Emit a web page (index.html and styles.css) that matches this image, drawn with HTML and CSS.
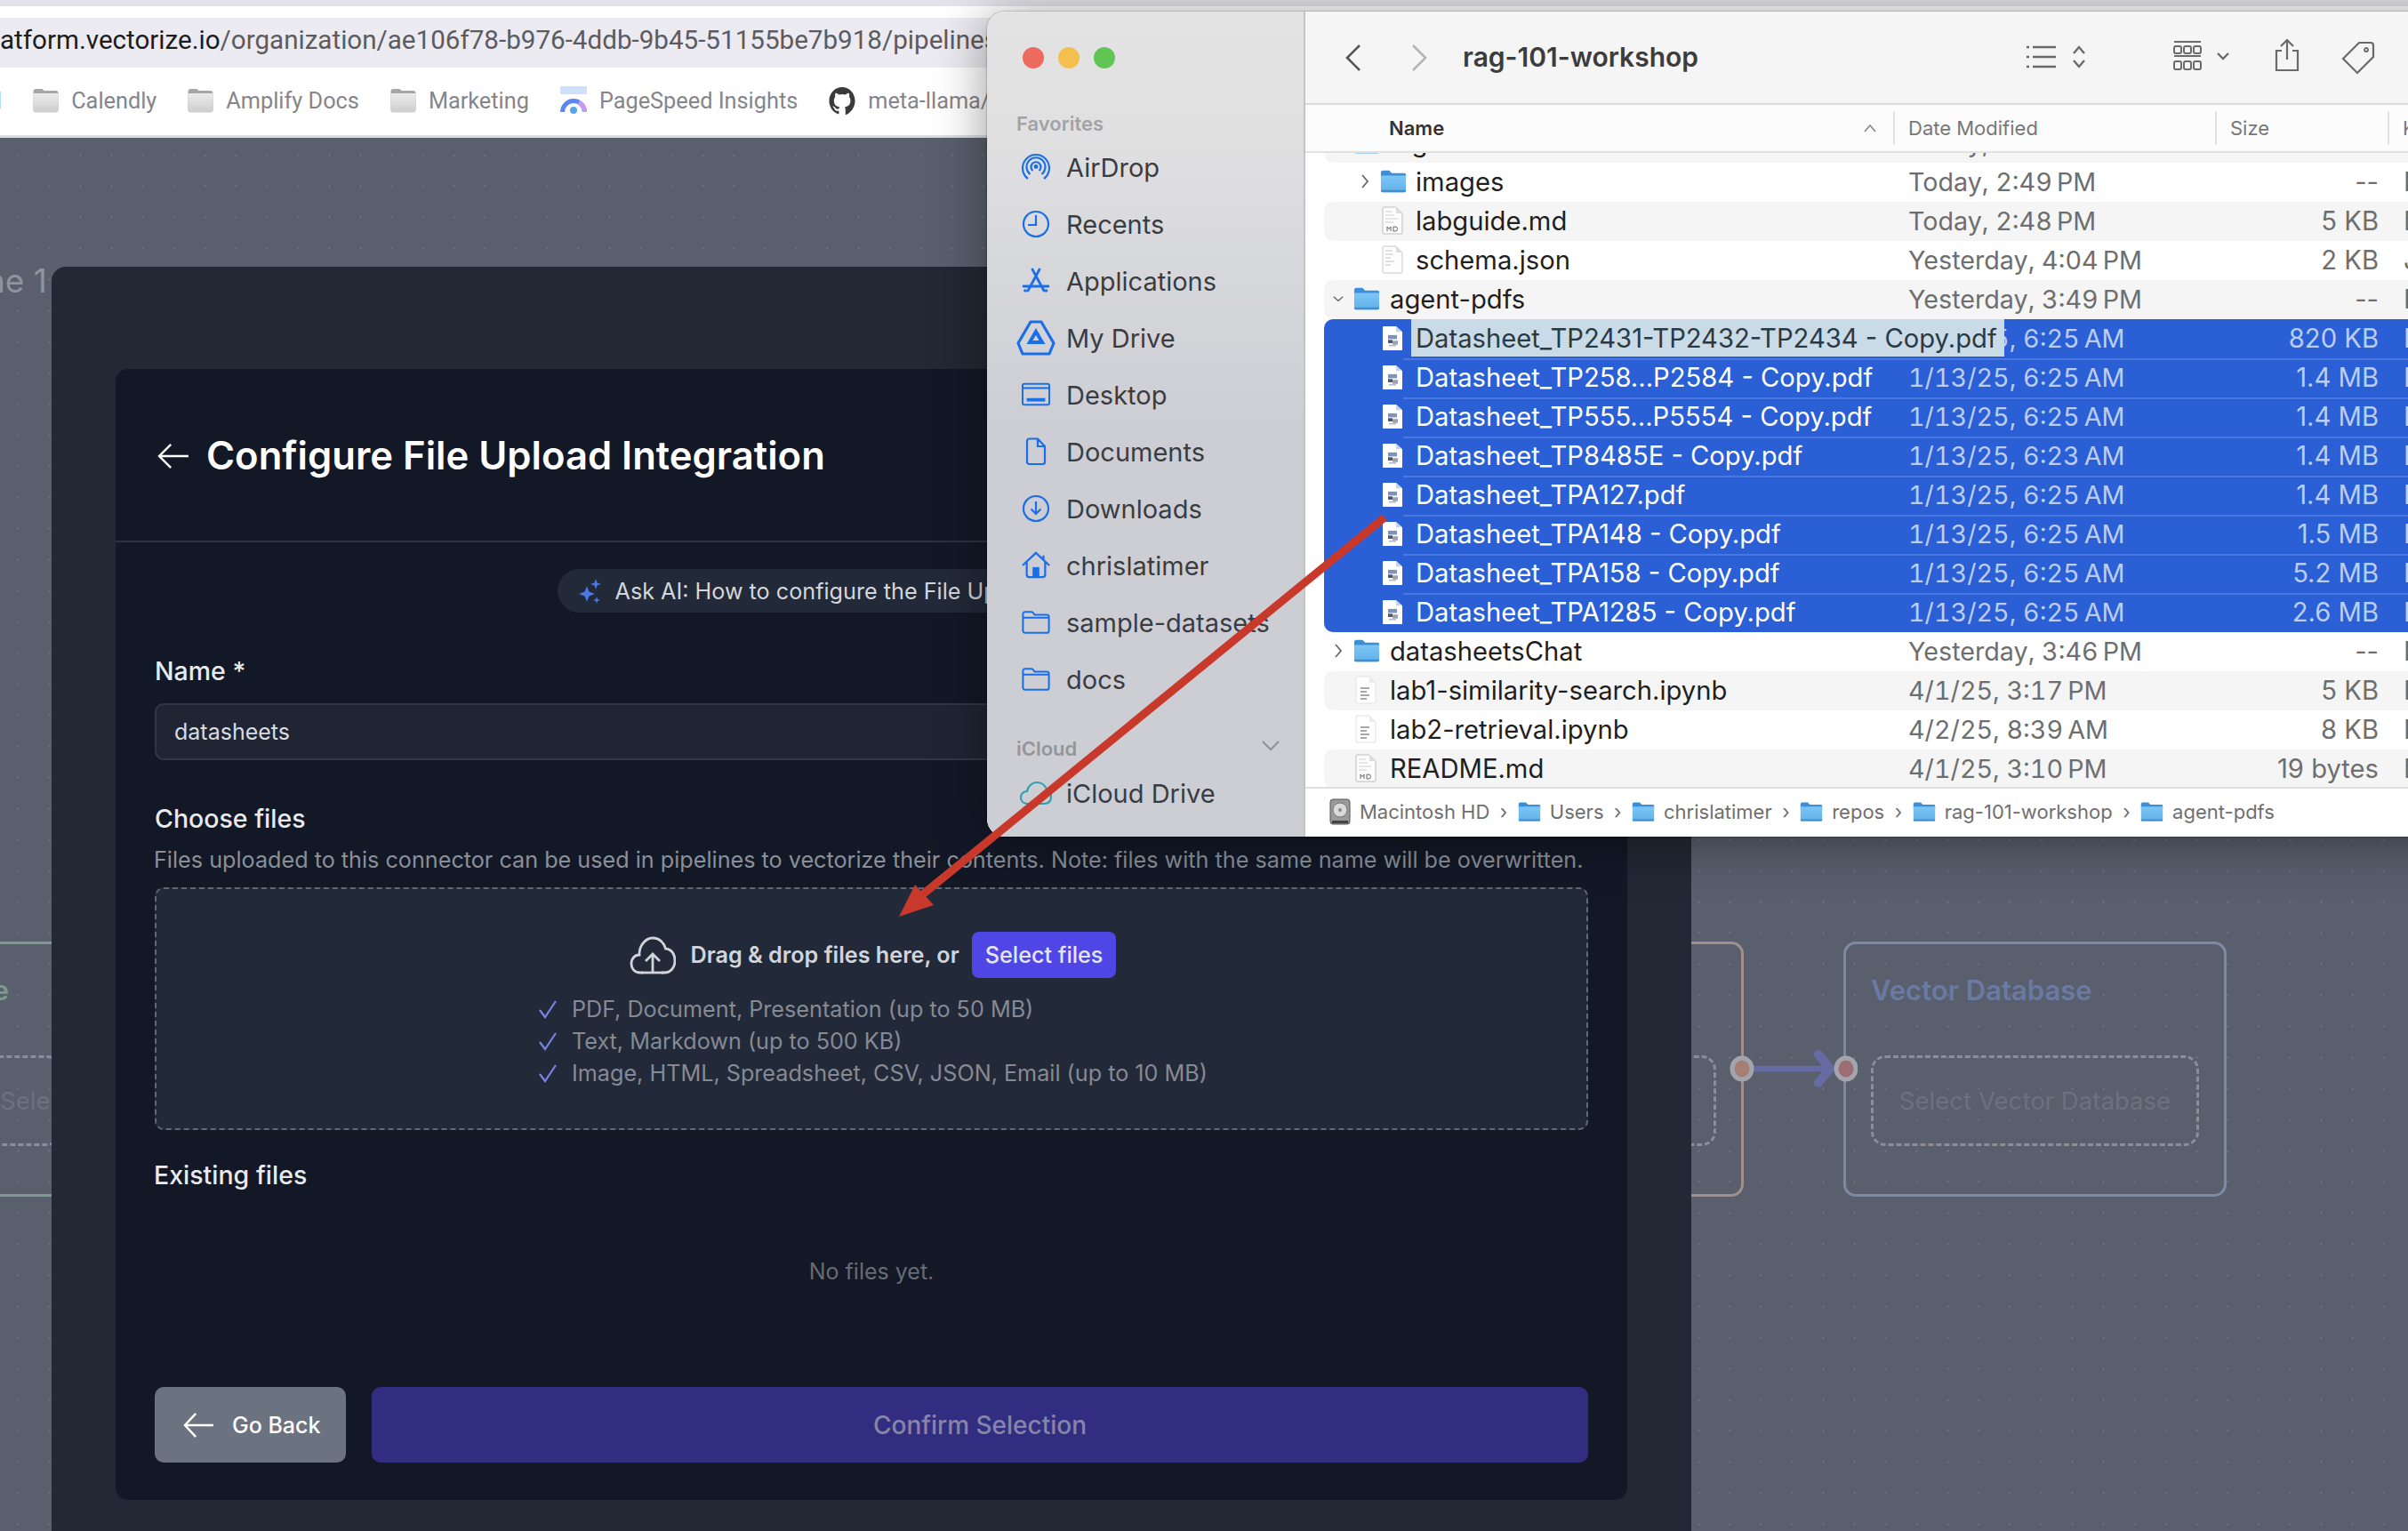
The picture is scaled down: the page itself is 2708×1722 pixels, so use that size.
FILE: index.html
```html
<!DOCTYPE html>
<html>
<head>
    <meta charset="utf-8">
    <title>Configure File Upload Integration</title>
    <link rel="stylesheet" href="styles.css">
</head>
<body>
<svg class="defs" width="0" height="0">
    <defs>
        <linearGradient id="fold" x1="0" y1="0" x2="0" y2="1">
            <stop offset="0" stop-color="#7cc6f5"/>
            <stop offset="1" stop-color="#62b0ea"/>
        </linearGradient>
        <linearGradient id="bmfold" x1="0" y1="0" x2="0" y2="1">
            <stop offset="0" stop-color="#ececec"/>
            <stop offset="1" stop-color="#cdcdcd"/>
        </linearGradient>
        <symbol id="folder" viewBox="0 0 32 28">
            <path d="M1 3.500C1 2 2 1 3.500 1H11l3 3h15c1.300 0 2 .8 2 2v4H1z" fill="#3d8fd8"/>
            <path d="M1 7h30v18c0 1.300-.8 2-2 2H3c-1.300 0-2-.7-2-2z" fill="url(#fold)"/>
            <path d="M1 24.500h30V25c0 1.300-.8 2-2 2H3c-1.300 0-2-.7-2-2z" fill="#3f8fd2"/>
        </symbol>
        <symbol id="bmfolder" viewBox="0 0 30 28">
            <path d="M1 4c0-2 1-3 3-3h6c1 0 1.500.5 2 1l1 1h13c2 0 3 1 3 3v18c0 2-1 3-3 3H4c-2 0-3-1-3-3z" fill="#a6a6a6"/>
            <path d="M1 6h28v19c0 1.500-1 2.500-2.500 2.500h-23C2 27.500 1 26.500 1 25z" fill="url(#bmfold)"/>
        </symbol>
        <symbol id="pdf" viewBox="0 0 24 32" preserveAspectRatio="none">
            <path d="M1 2c0-.6.4-1 1-1h14l7 7v22c0 .6-.4 1-1 1H2c-.6 0-1-.4-1-1z" fill="#fff"/>
            <path d="M16 1v7h7z" fill="#c9d2e2"/>
            <rect x="7" y="12" width="10" height="5" fill="#7d92be"/>
            <rect x="7" y="18" width="5" height="4" fill="#4b5470"/>
            <rect x="12" y="19" width="6" height="5" fill="#9aa2b4"/>
            <rect x="8" y="24" width="8" height="2" fill="#b8bdc9"/>
        </symbol>
        <symbol id="textdoc" viewBox="0 0 24 32">
            <path d="M1 2c0-.6.4-1 1-1h14l7 7v22c0 .6-.4 1-1 1H2c-.6 0-1-.4-1-1z" fill="#fdfdfd" stroke="#c8c8c8"/>
            <path d="M16 1v7h7z" fill="#dedede"/>
            <path d="M4 6h8M4 10h9M4 14h6M4 18h10M4 22h6" stroke="#c4c4c4" stroke-width="1.200"/>
        </symbol>
        <symbol id="mddoc" viewBox="0 0 24 32">
            <path d="M1 2c0-.6.4-1 1-1h14l7 7v22c0 .6-.4 1-1 1H2c-.6 0-1-.4-1-1z" fill="#fdfdfd" stroke="#bdbdbd"/>
            <path d="M16 1v7h7z" fill="#dedede"/>
            <path d="M4 6h8M4 10h10M4 14h14M4 18h9" stroke="#cfcfcf" stroke-width="1.200"/>
            <path d="M6 28v-5l2 2.500 2-2.500v5M13 23v5h2a2.500 2.500 0 0 0 0-5z" fill="none" stroke="#666" stroke-width="1"/>
        </symbol>
        <symbol id="notebook" viewBox="0 0 24 32">
            <path d="M1 2c0-.6.4-1 1-1h14l7 7v22c0 .6-.4 1-1 1H2c-.6 0-1-.4-1-1z" fill="#fff" stroke="#e2e2e2"/>
            <path d="M16 1v7h7z" fill="#ececec"/>
            <path d="M6 14h10M6 18h7M6 22h10M6 26h7" stroke="#a8a8a8" stroke-width="1.800"/>
        </symbol>
        <symbol id="side-folder" viewBox="0 0 34 28">
            <path d="M1.500 5V4c0-1.500 1-2.500 2.500-2.500h7.500c1 0 1.500.4 2 1L15.500 5H30c1.500 0 2.500 1 2.500 2.500V24c0 1.500-1 2.500-2.500 2.500H4c-1.500 0-2.500-1-2.500-2.500zM1.500 8.500h31" fill="none" stroke="#1a6fe8" stroke-width="2.200"/>
        </symbol>
    </defs>
</svg>

<div class="screen">
    <div class="top-strip"></div>
    <div class="urlbar"><span class="host">atform.vectorize.io</span>/organization/ae106f78-b976-4ddb-9b45-51155be7b918/pipelines</div>
    <div class="bookmarks">
        <span class="bm bm-cut">l</span>
        <span class="bm"><svg class="bm-folder"><use href="#bmfolder"/></svg>Calendly</span>
        <span class="bm"><svg class="bm-folder"><use href="#bmfolder"/></svg>Amplify Docs</span>
        <span class="bm"><svg class="bm-folder"><use href="#bmfolder"/></svg>Marketing</span>
        <span class="bm"><svg class="bm-site" viewBox="0 0 32 32"><rect x="1" y="0" width="30" height="9" rx="1" fill="#cfe0fb"/><path d="M3.500 29a12.500 12.500 0 0 1 25 0" fill="none" stroke="#5c86ee" stroke-width="5"/><path d="M22 18a12.500 12.500 0 0 1 6.500 11" fill="none" stroke="#c79cf0" stroke-width="5"/><circle cx="16" cy="27" r="4" fill="#5aa6ee"/></svg>PageSpeed Insights</span>
        <span class="bm"><svg class="bm-site" viewBox="0 0 32 33"><path d="M16 1C7.700 1 1 8 1 17c0 7 4.300 13 10.300 15.300.8.2 1-.4 1-.8v-3c-4.200 1-5-2-5-2-.7-1.800-1.700-2.300-1.700-2.300-1.400-1 .1-1 .1-1 1.500.1 2.300 1.600 2.300 1.600 1.300 2.400 3.500 1.700 4.400 1.300.1-1 .5-1.700 1-2.100-3.300-.4-6.800-1.700-6.800-7.600 0-1.700.6-3 1.500-4.100-.1-.4-.7-2 .2-4.200 0 0 1.300-.4 4.100 1.600a14 14 0 0 1 7.500 0c2.800-2 4.100-1.600 4.100-1.600.9 2.200.3 3.800.2 4.200 1 1.100 1.500 2.400 1.500 4.100 0 5.900-3.500 7.200-6.800 7.600.5.500 1 1.400 1 2.800v5.500c0 .4.300 1 1 .8C26.700 30 31 24 31 17 31 8 24.300 1 16 1z" fill="#3a3a3a"/></svg>meta-llama/synth</span>
    </div>

    <div class="canvas">
        <div class="canvas-title">ne 1</div>

        <div class="node node-source">
            <div class="node-name">Source Type</div>
            <div class="node-slot">Select Source</div>
        </div>
        <div class="node node-embed">
            <div class="node-slot"></div>
        </div>
        <div class="node node-vector">
            <div class="node-name">Vector Database</div>
            <div class="node-slot">Select Vector Database</div>
        </div>
        <svg class="edge" viewBox="0 0 146 56">
            <path d="M18 28h92" stroke="#666ba3" stroke-width="6.500"/>
            <path d="M102 12l13 16-13 16" fill="none" stroke="#666ba3" stroke-width="10" stroke-linecap="round"/>
            <ellipse cx="16" cy="28" rx="11" ry="12" fill="#a67f74" stroke="#a3a5ad" stroke-width="5"/>
            <ellipse cx="133" cy="28" rx="11" ry="12" fill="#9c6e74" stroke="#a3a5ad" stroke-width="5"/>
        </svg>

        <div class="dialog">
            <div class="card">
                <div class="card-head">
                    <svg class="head-arrow" viewBox="0 0 40 32"><path d="M38 16H3M17 2L3 16l14 14" fill="none" stroke="#fff" stroke-width="2.600"/></svg>
                    <h1>Configure File Upload Integration</h1>
                </div>
                <div class="card-body">
                    <div class="ask-ai">
                        <svg class="spark" viewBox="0 0 28 30"><path d="M11 9l2.500 6.500L20 18l-6.500 2.500L11 27l-2.500-6.500L2 18l6.500-2.500z" fill="#4a78e6"/><path d="M21 1l1.600 4.400L27 7l-4.400 1.600L21 13l-1.600-4.400L15 7l4.400-1.600zM22 21l1 2.900 3 1.100-3 1.100-1 2.900-1-2.900-3-1.100 3-1.100z" fill="#4a78e6"/></svg>
                        Ask AI: How to configure the File Upload Integration
                    </div>

                    <label class="field-label name-label">Name *</label>
                    <div class="text-input">datasheets</div>

                    <label class="field-label choose-label">Choose files</label>
                    <p class="help">Files uploaded to this connector can be used in pipelines to vectorize their contents. Note: files with the same name will be overwritten.</p>

                    <div class="dropzone">
                        <div class="drop-row">
                            <svg class="cloud" viewBox="0 0 52 44"><path d="M15 42H12C5 42 2 37 2 32c0-6 4-10 9-10-.5-9 6-19 15-19 8 0 13 6 14.500 12 6.500.5 10.500 6 10.500 13.500 0 8-5 13.500-12 13.500h-3" fill="none" stroke="#d1d5db" stroke-width="2.800"/><path d="M26 41V22M18 29l8-8 8 8" fill="none" stroke="#d1d5db" stroke-width="2.800"/><path d="M14 42h24" stroke="#d1d5db" stroke-width="2.800"/></svg>
                            <span class="drop-text">Drag &amp; drop files here, or</span>
                            <span class="select-btn">Select files</span>
                        </div>
                        <ul class="types">
                            <li><svg class="tick" viewBox="0 0 22 22"><path d="M2 12l6 8L20 2" fill="none" stroke="#7b83e0" stroke-width="2.200"/></svg>PDF, Document, Presentation (up to 50 MB)</li>
                            <li><svg class="tick" viewBox="0 0 22 22"><path d="M2 12l6 8L20 2" fill="none" stroke="#7b83e0" stroke-width="2.200"/></svg>Text, Markdown (up to 500 KB)</li>
                            <li><svg class="tick" viewBox="0 0 22 22"><path d="M2 12l6 8L20 2" fill="none" stroke="#7b83e0" stroke-width="2.200"/></svg>Image, HTML, Spreadsheet, CSV, JSON, Email (up to 10 MB)</li>
                        </ul>
                    </div>

                    <label class="field-label existing-label">Existing files</label>
                    <div class="no-files">No files yet.</div>

                    <div class="card-foot">
                        <div class="btn-back">
                            <svg class="back-arrow" viewBox="0 0 38 32"><path d="M37 16H3M16 2L3 16l13 14" fill="none" stroke="#fff" stroke-width="2.600"/></svg>
                            Go Back
                        </div>
                        <div class="btn-confirm">Confirm Selection</div>
                    </div>
                </div>
            </div>
        </div>
    </div>

    <div class="finder">
        <div class="sidebar">
            <div class="lights"><i class="red"></i><i class="yellow"></i><i class="green"></i></div>
            <div class="side-title">Favorites</div>
            <div class="side-item"><svg viewBox="0 0 32 32"><g fill="none" stroke="#1a6fe8" stroke-width="2.200"><path d="M7 29a15 15 0 1 1 18 0"/><path d="M9.500 24a10.500 10.500 0 1 1 13 0"/><path d="M12.500 20a5.500 5.500 0 1 1 7 0"/></g><circle cx="16" cy="15.500" r="2.400" fill="#1a6fe8"/></svg>AirDrop</div>
            <div class="side-item"><svg viewBox="0 0 32 32"><g fill="none" stroke="#1a6fe8" stroke-width="2.200"><circle cx="16" cy="16" r="14"/><path d="M16 6v11H7"/></g></svg>Recents</div>
            <div class="side-item"><svg viewBox="0 0 32 32"><g fill="none" stroke="#1a6fe8" stroke-width="2.800" stroke-linecap="round"><path d="M12 3l13 24M20 3L7 27"/><path d="M2 22h28"/><path d="M3.500 27h1M27 27h1"/></g></svg>Applications</div>
            <div class="side-item"><svg class="drive" viewBox="0 0 44 40"><path d="M16 2h12l14 24-5 12H7L2 26z" fill="none" stroke="#1a6fe8" stroke-width="3.200" stroke-linejoin="round"/><path d="M22 13l7 12H15z" fill="none" stroke="#1a6fe8" stroke-width="4"/></svg>My Drive</div>
            <div class="side-item"><svg viewBox="0 0 34 28"><g fill="none" stroke="#1a6fe8" stroke-width="2.200"><rect x="1" y="1" width="32" height="25" rx="2"/><path d="M1 6h32"/></g><rect x="6" y="18" width="22" height="4" fill="#1a6fe8"/></svg>Desktop</div>
            <div class="side-item"><svg viewBox="0 0 32 32"><path d="M6 4c0-1.500 1-2.500 2.500-2.500H18L26 10v17.500C26 29 25 30 23.500 30h-15C7 30 6 29 6 27.500zM18 1.500V10h8" fill="none" stroke="#1a6fe8" stroke-width="2.200"/></svg>Documents</div>
            <div class="side-item"><svg viewBox="0 0 32 32"><g fill="none" stroke="#1a6fe8" stroke-width="2.200"><circle cx="16" cy="16" r="14"/><path d="M16 8v14M10.500 16.500L16 22l5.500-5.500"/></g></svg>Downloads</div>
            <div class="side-item"><svg viewBox="0 0 34 32"><path d="M1 16L17 1l16 15M6 12v15c0 2 1 3 3 3h16c2 0 3-1 3-3V12M26 4v6" fill="none" stroke="#1a6fe8" stroke-width="2.400"/><rect x="13" y="18" width="8" height="12" fill="#1a6fe8"/></svg>chrislatimer</div>
            <div class="side-item"><svg viewBox="0 0 34 28"><use href="#side-folder"/></svg>sample-datasets</div>
            <div class="side-item"><svg viewBox="0 0 34 28"><use href="#side-folder"/></svg>docs</div>
            <div class="side-title icloud">iCloud<svg viewBox="0 0 22 14"><path d="M2 2l9 9 9-9" fill="none" stroke="#8f9097" stroke-width="2"/></svg></div>
            <div class="side-item last"><svg class="cloud-side" viewBox="0 0 38 28"><path d="M10 26C5 26 2 23 2 19c0-4 3-7 7-7 1-6 6-10 11-10 6 0 10 4 11 9 3 1 5 4 5 7 0 5-3 8-8 8z" fill="none" stroke="#2e9fb0" stroke-width="2.200"/></svg>iCloud Drive</div>
        </div>

        <div class="pane">
            <div class="toolbar">
                <svg class="nav back" viewBox="0 0 20 32"><path d="M17 2L3 16l14 14" fill="none" stroke="#555" stroke-width="2.600"/></svg>
                <svg class="nav fwd" viewBox="0 0 20 32"><path d="M3 2l14 14L3 30" fill="none" stroke="#b4b4b4" stroke-width="2.600"/></svg>
                <span class="folder-title">rag-101-workshop</span>
                <svg class="tool t-list" viewBox="0 0 70 30"><g stroke="#6a6a6a" stroke-width="2.400" fill="none"><path d="M8 4h26M8 15h26M8 26h26"/><path d="M1 4h3M1 15h3M1 26h3"/><path d="M54 11l6-7 6 7M54 19l6 7 6-7"/></g></svg>
                <svg class="tool t-grid" viewBox="0 0 70 36"><g stroke="#6a6a6a" stroke-width="2" fill="none"><path d="M1 2h30M1 18h30"/><rect x="1" y="7" width="8" height="8" rx="2"/><rect x="12" y="7" width="8" height="8" rx="2"/><rect x="23" y="7" width="8" height="8" rx="2"/><rect x="1" y="24" width="8" height="9" rx="2"/><rect x="12" y="24" width="8" height="9" rx="2"/><rect x="23" y="24" width="8" height="9" rx="2"/><path d="M50 15l6 6 6-6" stroke-width="2.400"/></g></svg>
                <svg class="tool t-share" viewBox="0 0 30 38"><path d="M9 14H3v22h24V14h-6M15 24V2M8 9l7-7 7 7" fill="none" stroke="#6a6a6a" stroke-width="2.200"/></svg>
                <svg class="tool t-tag" viewBox="0 0 38 38"><path d="M20 2h13c2 0 3 1 3 3v13L18 36 2 20z" fill="none" stroke="#6a6a6a" stroke-width="2.200"/><circle cx="28" cy="10" r="2" fill="none" stroke="#6a6a6a" stroke-width="1.800"/></svg>
            </div>

            <div class="col-head">
                <span class="col col-name">Name<svg viewBox="0 0 14 10"><path d="M1 9l6-7 6 7" fill="none" stroke="#888" stroke-width="1.600"/></svg></span>
                <span class="col col-date">Date Modified</span>
                <span class="col col-size">Size</span>
                <span class="col col-kind">Kind</span>
            </div>

            <div class="list">
                <div class="row stripe cut"><span class="name top"><svg class="ficon folder-ic"><use href="#folder"/></svg>logs</span><span class="date">Today, 2:50&#8239;PM</span><span class="size">--</span><span class="kind">Folder</span></div>
                <div class="row"><span class="name sub"><svg class="chev" viewBox="0 0 10 16"><path d="M2 1l6 7-6 7" fill="none" stroke="#666" stroke-width="1.800"/></svg><svg class="ficon folder-ic"><use href="#folder"/></svg>images</span><span class="date">Today, 2:49&#8239;PM</span><span class="size">--</span><span class="kind">Folder</span></div>
                <div class="row stripe"><span class="name sub"><svg class="ficon doc-ic"><use href="#mddoc"/></svg>labguide.md</span><span class="date">Today, 2:48&#8239;PM</span><span class="size">5 KB</span><span class="kind">Markdown</span></div>
                <div class="row"><span class="name sub"><svg class="ficon doc-ic"><use href="#textdoc"/></svg>schema.json</span><span class="date">Yesterday, 4:04&#8239;PM</span><span class="size">2 KB</span><span class="kind">JSON</span></div>
                <div class="row stripe"><span class="name top"><svg class="chev" viewBox="0 0 16 10"><path d="M1 2l7 6 7-6" fill="none" stroke="#666" stroke-width="1.800"/></svg><svg class="ficon folder-ic"><use href="#folder"/></svg>agent-pdfs</span><span class="date">Yesterday, 3:49&#8239;PM</span><span class="size">--</span><span class="kind">Folder</span></div>

                <div class="selected">
                    <div class="row"><span class="name sub"><svg class="ficon doc-ic"><use href="#pdf"/></svg><span class="renaming">Datasheet_TP2431-TP2432-TP2434 - Copy.pdf</span></span><span class="date">1/13/25, 6:25&#8239;AM</span><span class="size">820 KB</span><span class="kind">PDF</span></div>
                    <div class="row"><span class="name sub"><svg class="ficon doc-ic"><use href="#pdf"/></svg>Datasheet_TP258...P2584 - Copy.pdf</span><span class="date">1/13/25, 6:25&#8239;AM</span><span class="size">1.4 MB</span><span class="kind">PDF</span></div>
                    <div class="row"><span class="name sub"><svg class="ficon doc-ic"><use href="#pdf"/></svg>Datasheet_TP555...P5554 - Copy.pdf</span><span class="date">1/13/25, 6:25&#8239;AM</span><span class="size">1.4 MB</span><span class="kind">PDF</span></div>
                    <div class="row"><span class="name sub"><svg class="ficon doc-ic"><use href="#pdf"/></svg>Datasheet_TP8485E - Copy.pdf</span><span class="date">1/13/25, 6:23&#8239;AM</span><span class="size">1.4 MB</span><span class="kind">PDF</span></div>
                    <div class="row"><span class="name sub"><svg class="ficon doc-ic"><use href="#pdf"/></svg>Datasheet_TPA127.pdf</span><span class="date">1/13/25, 6:25&#8239;AM</span><span class="size">1.4 MB</span><span class="kind">PDF</span></div>
                    <div class="row"><span class="name sub"><svg class="ficon doc-ic"><use href="#pdf"/></svg>Datasheet_TPA148 - Copy.pdf</span><span class="date">1/13/25, 6:25&#8239;AM</span><span class="size">1.5 MB</span><span class="kind">PDF</span></div>
                    <div class="row"><span class="name sub"><svg class="ficon doc-ic"><use href="#pdf"/></svg>Datasheet_TPA158 - Copy.pdf</span><span class="date">1/13/25, 6:25&#8239;AM</span><span class="size">5.2 MB</span><span class="kind">PDF</span></div>
                    <div class="row"><span class="name sub"><svg class="ficon doc-ic"><use href="#pdf"/></svg>Datasheet_TPA1285 - Copy.pdf</span><span class="date">1/13/25, 6:25&#8239;AM</span><span class="size">2.6 MB</span><span class="kind">PDF</span></div>
                </div>

                <div class="row"><span class="name top"><svg class="chev" viewBox="0 0 10 16"><path d="M2 1l6 7-6 7" fill="none" stroke="#666" stroke-width="1.800"/></svg><svg class="ficon folder-ic"><use href="#folder"/></svg>datasheetsChat</span><span class="date">Yesterday, 3:46&#8239;PM</span><span class="size">--</span><span class="kind">Folder</span></div>
                <div class="row stripe"><span class="name top"><svg class="ficon doc-ic"><use href="#notebook"/></svg>lab1-similarity-search.ipynb</span><span class="date">4/1/25, 3:17&#8239;PM</span><span class="size">5 KB</span><span class="kind">Document</span></div>
                <div class="row"><span class="name top"><svg class="ficon doc-ic"><use href="#notebook"/></svg>lab2-retrieval.ipynb</span><span class="date">4/2/25, 8:39&#8239;AM</span><span class="size">8 KB</span><span class="kind">Document</span></div>
                <div class="row stripe"><span class="name top"><svg class="ficon doc-ic"><use href="#mddoc"/></svg>README.md</span><span class="date">4/1/25, 3:10&#8239;PM</span><span class="size">19 bytes</span><span class="kind">Markdown</span></div>
            </div>

            <div class="pathbar">
                <svg class="disk" viewBox="0 0 24 30"><rect x="1" y="1" width="22" height="28" rx="3" fill="#9a9a9a" stroke="#555"/><circle cx="12" cy="13" r="8" fill="#d9d9d9" stroke="#777"/><circle cx="12" cy="13" r="2" fill="#888"/><rect x="3" y="25" width="18" height="3" fill="#444"/></svg>
                <span>Macintosh HD</span><b>›</b>
                <svg class="crumb"><use href="#folder"/></svg><span>Users</span><b>›</b>
                <svg class="crumb"><use href="#folder"/></svg><span>chrislatimer</span><b>›</b>
                <svg class="crumb"><use href="#folder"/></svg><span>repos</span><b>›</b>
                <svg class="crumb"><use href="#folder"/></svg><span>rag-101-workshop</span><b>›</b>
                <svg class="crumb"><use href="#folder"/></svg><span>agent-pdfs</span>
            </div>
        </div>
    </div>

    <svg class="red-arrow" viewBox="0 0 2708 1722">
        <path d="M1557 582L1034 1009" stroke="#c8392b" stroke-width="9"/>
        <path d="M1011 1031L1029 995L1050 1018z" fill="#c8392b"/>
    </svg>
</div>
</body>
</html>
```

FILE: styles.css
```css
* {
    box-sizing: border-box;
}

html, body {
    margin: 0;
    padding: 0;
}

body {
    width: 2708px;
    height: 1722px;
    overflow: hidden;
    font-family: Inter, "Liberation Sans", sans-serif;
}

.defs {
    position: absolute;
}

.screen {
    position: relative;
    width: 2708px;
    height: 1722px;
    overflow: hidden;
    display: flex;
    flex-direction: column;
    background: #fff;
}

/* browser chrome */
.top-strip {
    height: 20px;
    flex: none;
    background: linear-gradient(#e3e3e9 0, #e3e3e9 7px, #fff 7px);
}

.urlbar {
    height: 56px;
    flex: none;
    background: #ebebf1;
    line-height: 50px;
    font-family: Roboto, sans-serif;
    font-size: 29.600px;
    color: #5b5b61;
    white-space: nowrap;
    overflow: hidden;
}

.host {
    color: #1c1c1e;
}

.bookmarks {
    height: 79px;
    flex: none;
    padding: 0 0 2px 0;
    display: flex;
    align-items: center;
    gap: 34px;
    background: #fff;
    border-bottom: 3px solid #dcdde2;
    font-family: Roboto, sans-serif;
    font-size: 25.300px;
    color: #85858a;
    white-space: nowrap;
}

.bm {
    display: flex;
    align-items: center;
    gap: 13px;
}

.bm-cut {
    margin-left: -4px;
}

.bm-folder {
    width: 31px;
    height: 28px;
}

.bm-site {
    width: 32px;
    height: 32px;
}

/* pipeline canvas behind the dialog */
.canvas {
    position: relative;
    flex: 1;
    background-color: #5a5f6d;
    background-image: radial-gradient(circle, rgba(255, 255, 255, 0.1) 1px, transparent 1.5px);
    background-size: 35px 35px;
    background-position: 3px 2px;
}

.canvas-title {
    position: absolute;
    left: -16px;
    top: 138px;
    font-size: 37px;
    color: #8f939d;
    white-space: nowrap;
}

.node {
    position: absolute;
    top: 904px;
    height: 287px;
    border: 3px solid #7d8aa6;
    border-radius: 14px;
    padding: 33px 28px;
}

.node-name {
    font-size: 31px;
    font-weight: 600;
    color: #6b7aa2;
    white-space: nowrap;
}

.node-slot {
    position: absolute;
    left: 28px;
    right: 28px;
    top: 125px;
    height: 102px;
    border: 3px dashed #8b8e98;
    border-radius: 16px;
    display: flex;
    align-items: center;
    justify-content: center;
    font-size: 27.600px;
    color: #6c7180;
    white-space: nowrap;
}

.node-source {
    left: -400px;
    width: 500px;
    border-color: #7f9a8f;
}

.node-source .node-name {
    padding-right: 59px;
    color: #7c9a8a;
    text-align: right;
}

.node-source .node-slot {
    justify-content: flex-start;
    padding-left: 366px;
}

.node-embed {
    left: 1660px;
    width: 301px;
    border-color: #a0908a;
}

.node-vector {
    left: 2073px;
    width: 431px;
}

.edge {
    position: absolute;
    left: 1943px;
    top: 1019px;
    width: 146px;
    height: 56px;
}

.dialog {
    position: absolute;
    left: 58px;
    top: 145px;
    width: 1844px;
    height: 1450px;
    padding: 115px 72px 0;
    border-radius: 16px 0 0 0;
    background: #222834;
}

.card {
    height: 1272px;
    display: flex;
    flex-direction: column;
    border-radius: 14px;
    background: #121826;
}

.card-head {
    height: 195px;
    flex: none;
    display: flex;
    align-items: center;
    gap: 18px;
    padding: 2px 0 0 46px;
    border-bottom: 2px solid #2b3242;
}

.head-arrow {
    width: 38px;
    height: 30px;
}

.card-head h1 {
    margin: 0;
    font-size: 43.600px;
    font-weight: 600;
    color: #fff;
}

.card-body {
    flex: 1;
    display: flex;
    flex-direction: column;
    padding: 30px 44px 42px;
}

.ask-ai {
    align-self: center;
    height: 49px;
    padding: 0 26px 0 22px;
    display: flex;
    align-items: center;
    gap: 15px;
    border-radius: 25px;
    background: #222938;
    font-size: 25.200px;
    color: #d3d6dc;
    white-space: nowrap;
}

.spark {
    width: 28px;
    height: 30px;
}

.field-label {
    display: block;
    line-height: 36px;
    font-size: 28.500px;
    font-weight: 500;
    color: #e8eaee;
}

.name-label {
    margin-top: 48px;
}

.text-input {
    height: 64px;
    margin-top: 18px;
    padding-left: 20px;
    display: flex;
    align-items: center;
    border: 2px solid #313746;
    border-radius: 10px;
    background: #1f2532;
    font-size: 25px;
    color: #d8dbe0;
}

.choose-label {
    margin-top: 48px;
}

.help {
    margin: 12px 0 0 -1px;
    line-height: 32px;
    font-size: 25.200px;
    color: #8b8f99;
    white-space: nowrap;
}

.dropzone {
    height: 273px;
    margin-top: 15px;
    padding-top: 48px;
    display: flex;
    flex-direction: column;
    align-items: center;
    border: 2px dashed #626875;
    border-radius: 10px;
    background: #222938;
}

.drop-row {
    padding-left: 3px;
    display: flex;
    align-items: center;
}

.cloud {
    width: 52px;
    height: 44px;
    margin-right: 17px;
}

.drop-text {
    font-size: 25.200px;
    font-weight: 600;
    color: #d1d5db;
}

.select-btn {
    height: 52px;
    margin-left: 14px;
    padding: 0 15px;
    display: flex;
    align-items: center;
    border-radius: 8px;
    background: #4f46e5;
    font-size: 25.200px;
    font-weight: 500;
    color: #e4e6fb;
}

.types {
    margin: 17px 0 0;
    padding: 0 0 0 3px;
    list-style: none;
    font-size: 25.200px;
    line-height: 36px;
    color: #858a94;
}

.types li {
    display: flex;
    align-items: center;
    gap: 16px;
}

.tick {
    width: 22px;
    height: 22px;
}

.existing-label {
    margin-top: 33px;
    margin-left: -1px;
}

.no-files {
    margin-top: 73px;
    line-height: 34px;
    text-align: center;
    font-size: 25px;
    color: #666b76;
}

.card-foot {
    margin-top: auto;
    height: 85px;
    display: flex;
    gap: 29px;
}

.btn-back {
    width: 215px;
    display: flex;
    align-items: center;
    gap: 20px;
    padding-left: 31px;
    border-radius: 10px;
    background: #6b7280;
    font-size: 25px;
    font-weight: 500;
    color: #fff;
}

.back-arrow {
    width: 36px;
    height: 30px;
}

.btn-confirm {
    flex: 1;
    display: flex;
    align-items: center;
    justify-content: center;
    border-radius: 10px;
    background: #312e81;
    font-size: 28px;
    font-weight: 500;
    color: #8684a8;
}

/* finder window, free floating over the browser */
.finder {
    position: absolute;
    left: 1110px;
    top: 13px;
    width: 1700px;
    height: 928px;
    display: flex;
    border-radius: 20px 0 0 20px;
    background: #fff;
    overflow: hidden;
    box-shadow: 0 6px 60px rgba(0, 0, 0, 0.4), 0 0 2px rgba(0, 0, 0, 0.5);
}

.sidebar {
    width: 358px;
    flex: none;
    padding-top: 40px;
    border-right: 2px solid #c4c4c6;
    background: linear-gradient(#e3e3e3 0, #e0e0e1 15%, #cdced4 50%, #cdced4 100%);
}

.lights {
    height: 24px;
    padding-left: 40px;
    display: flex;
    gap: 16px;
}

.lights i {
    width: 24px;
    height: 24px;
    border-radius: 50%;
}

.lights .red {
    background: #ec6a5e;
}

.lights .yellow {
    background: #f4bf4f;
}

.lights .green {
    background: #61c554;
}

.side-title {
    height: 26px;
    margin-top: 49px;
    padding: 0 26px 0 33px;
    display: flex;
    align-items: center;
    justify-content: space-between;
    font-size: 22px;
    font-weight: 600;
    color: #a2a3a7;
}

.side-title svg {
    width: 22px;
    height: 14px;
    margin-bottom: 6px;
}

.side-item {
    height: 64px;
    padding-left: 39px;
    display: flex;
    align-items: center;
    gap: 18px;
    font-size: 29px;
    color: #3a3c42;
    white-space: nowrap;
}

.side-title + .side-item {
    margin-top: 4px;
}

.side-item svg {
    width: 32px;
    height: 32px;
    flex: none;
}

.side-item svg.drive {
    width: 44px;
    height: 40px;
    margin: 0 -6px;
}

.side-item svg.cloud-side {
    width: 38px;
    height: 28px;
    margin: 0 -3px;
}

.side-title.icloud {
    margin-top: 33px;
    color: #94959b;
}

.side-item.last {
    margin-top: 5px;
}

.pane {
    flex: 1;
    display: flex;
    flex-direction: column;
}

.toolbar {
    position: relative;
    height: 105px;
    flex: none;
    background: #f5f5f5;
    border-bottom: 2px solid #dcdcdc;
}

.nav,
.tool {
    position: absolute;
}

.nav {
    top: 36px;
    width: 20px;
    height: 32px;
}

.nav.back {
    left: 44px;
}

.nav.fwd {
    left: 118px;
}

.folder-title {
    position: absolute;
    left: 177px;
    top: 31px;
    font-size: 30px;
    line-height: 40px;
    font-weight: 600;
    color: #3c3c3e;
}

.t-list {
    left: 810px;
    top: 36px;
    width: 70px;
    height: 30px;
}

.t-grid {
    left: 976px;
    top: 32px;
    width: 70px;
    height: 36px;
}

.t-share {
    left: 1089px;
    top: 30px;
    width: 30px;
    height: 38px;
}

.t-tag {
    left: 1165px;
    top: 33px;
    width: 38px;
    height: 38px;
}

.col-head {
    height: 54px;
    flex: none;
    display: grid;
    grid-template-columns: 661px 362px 194px 1fr;
    align-items: center;
    background: #fcfcfc;
    border-bottom: 2px solid #e2e2e2;
    font-size: 22px;
    color: #777;
}

.col {
    height: 38px;
    display: flex;
    align-items: center;
    padding-left: 15px;
    border-left: 2px solid #e2e2e2;
}

.col-name {
    padding: 0 19px 0 94px;
    justify-content: space-between;
    border-left: 0;
    font-weight: 600;
    color: #333;
}

.col-name svg {
    width: 14px;
    height: 10px;
}

.list {
    flex: 1;
    padding: 0 0 0 21px;
    overflow: hidden;
}

.row {
    position: relative;
    height: 44px;
    padding-bottom: 2px;
    display: grid;
    grid-template-columns: 657px 342px 187px 1fr;
    align-items: center;
    font-size: 29.200px;
    white-space: nowrap;
    border-radius: 10px 0 0 10px;
}

.row.stripe {
    background: #f5f5f5;
}

.row.cut {
    margin-top: -33px;
}

.name {
    display: flex;
    align-items: center;
    position: relative;
    color: #1f1f21;
}

.name.top {
    padding-left: 74px;
}

.name.sub {
    padding-left: 103px;
}

.ficon {
    position: absolute;
}

.folder-ic {
    width: 30px;
    height: 28px;
}

.name.top .folder-ic {
    left: 33px;
}

.name.sub .folder-ic {
    left: 63px;
}

.doc-ic {
    width: 24px;
    height: 32px;
}

.selected .doc-ic {
    height: 29px;
}

.name.top .doc-ic {
    left: 35px;
}

.name.sub .doc-ic {
    left: 65px;
}

.chev {
    position: absolute;
    width: 12px;
    height: 16px;
}

.name.top .chev {
    left: 10px;
}

.name.sub .chev {
    left: 40px;
}

.date {
    font-size: 28.700px;
    color: #6e6e6e;
    font-variant-numeric: tabular-nums;
}

.size {
    text-align: right;
    color: #6e6e6e;
}

.kind {
    padding-left: 28px;
    color: #6e6e6e;
}

.selected {
    border-radius: 10px 0 0 10px;
    background: #2a5fd6;
}

.selected .row {
    border-radius: 0;
}

.selected .row + .row::before {
    content: "";
    position: absolute;
    left: 89px;
    right: 0;
    top: 0;
    height: 2px;
    background: #4a78e0;
}

.selected .name {
    color: #fff;
}

.selected .date,
.selected .size,
.selected .kind {
    color: #bccdf5;
}

.renaming {
    position: relative;
    z-index: 1;
    height: 42px;
    margin-left: -5px;
    padding: 0 8px 0 5px;
    display: flex;
    align-items: center;
    background: #c9dbe6;
    color: #2a3a45;
}

.pathbar {
    height: 56px;
    flex: none;
    padding: 0 0 2px 27px;
    display: flex;
    align-items: center;
    gap: 10px;
    border-top: 2px solid #dedede;
    background: #fff;
    font-size: 22px;
    color: #6f6f6f;
    white-space: nowrap;
}

.pathbar b {
    font-weight: 400;
    margin: 0 1.500px;
}

.disk {
    width: 24px;
    height: 30px;
}

.crumb {
    width: 26px;
    height: 26px;
}

.red-arrow {
    position: absolute;
    left: 0;
    top: 0;
    width: 2708px;
    height: 1722px;
    pointer-events: none;
}
```
